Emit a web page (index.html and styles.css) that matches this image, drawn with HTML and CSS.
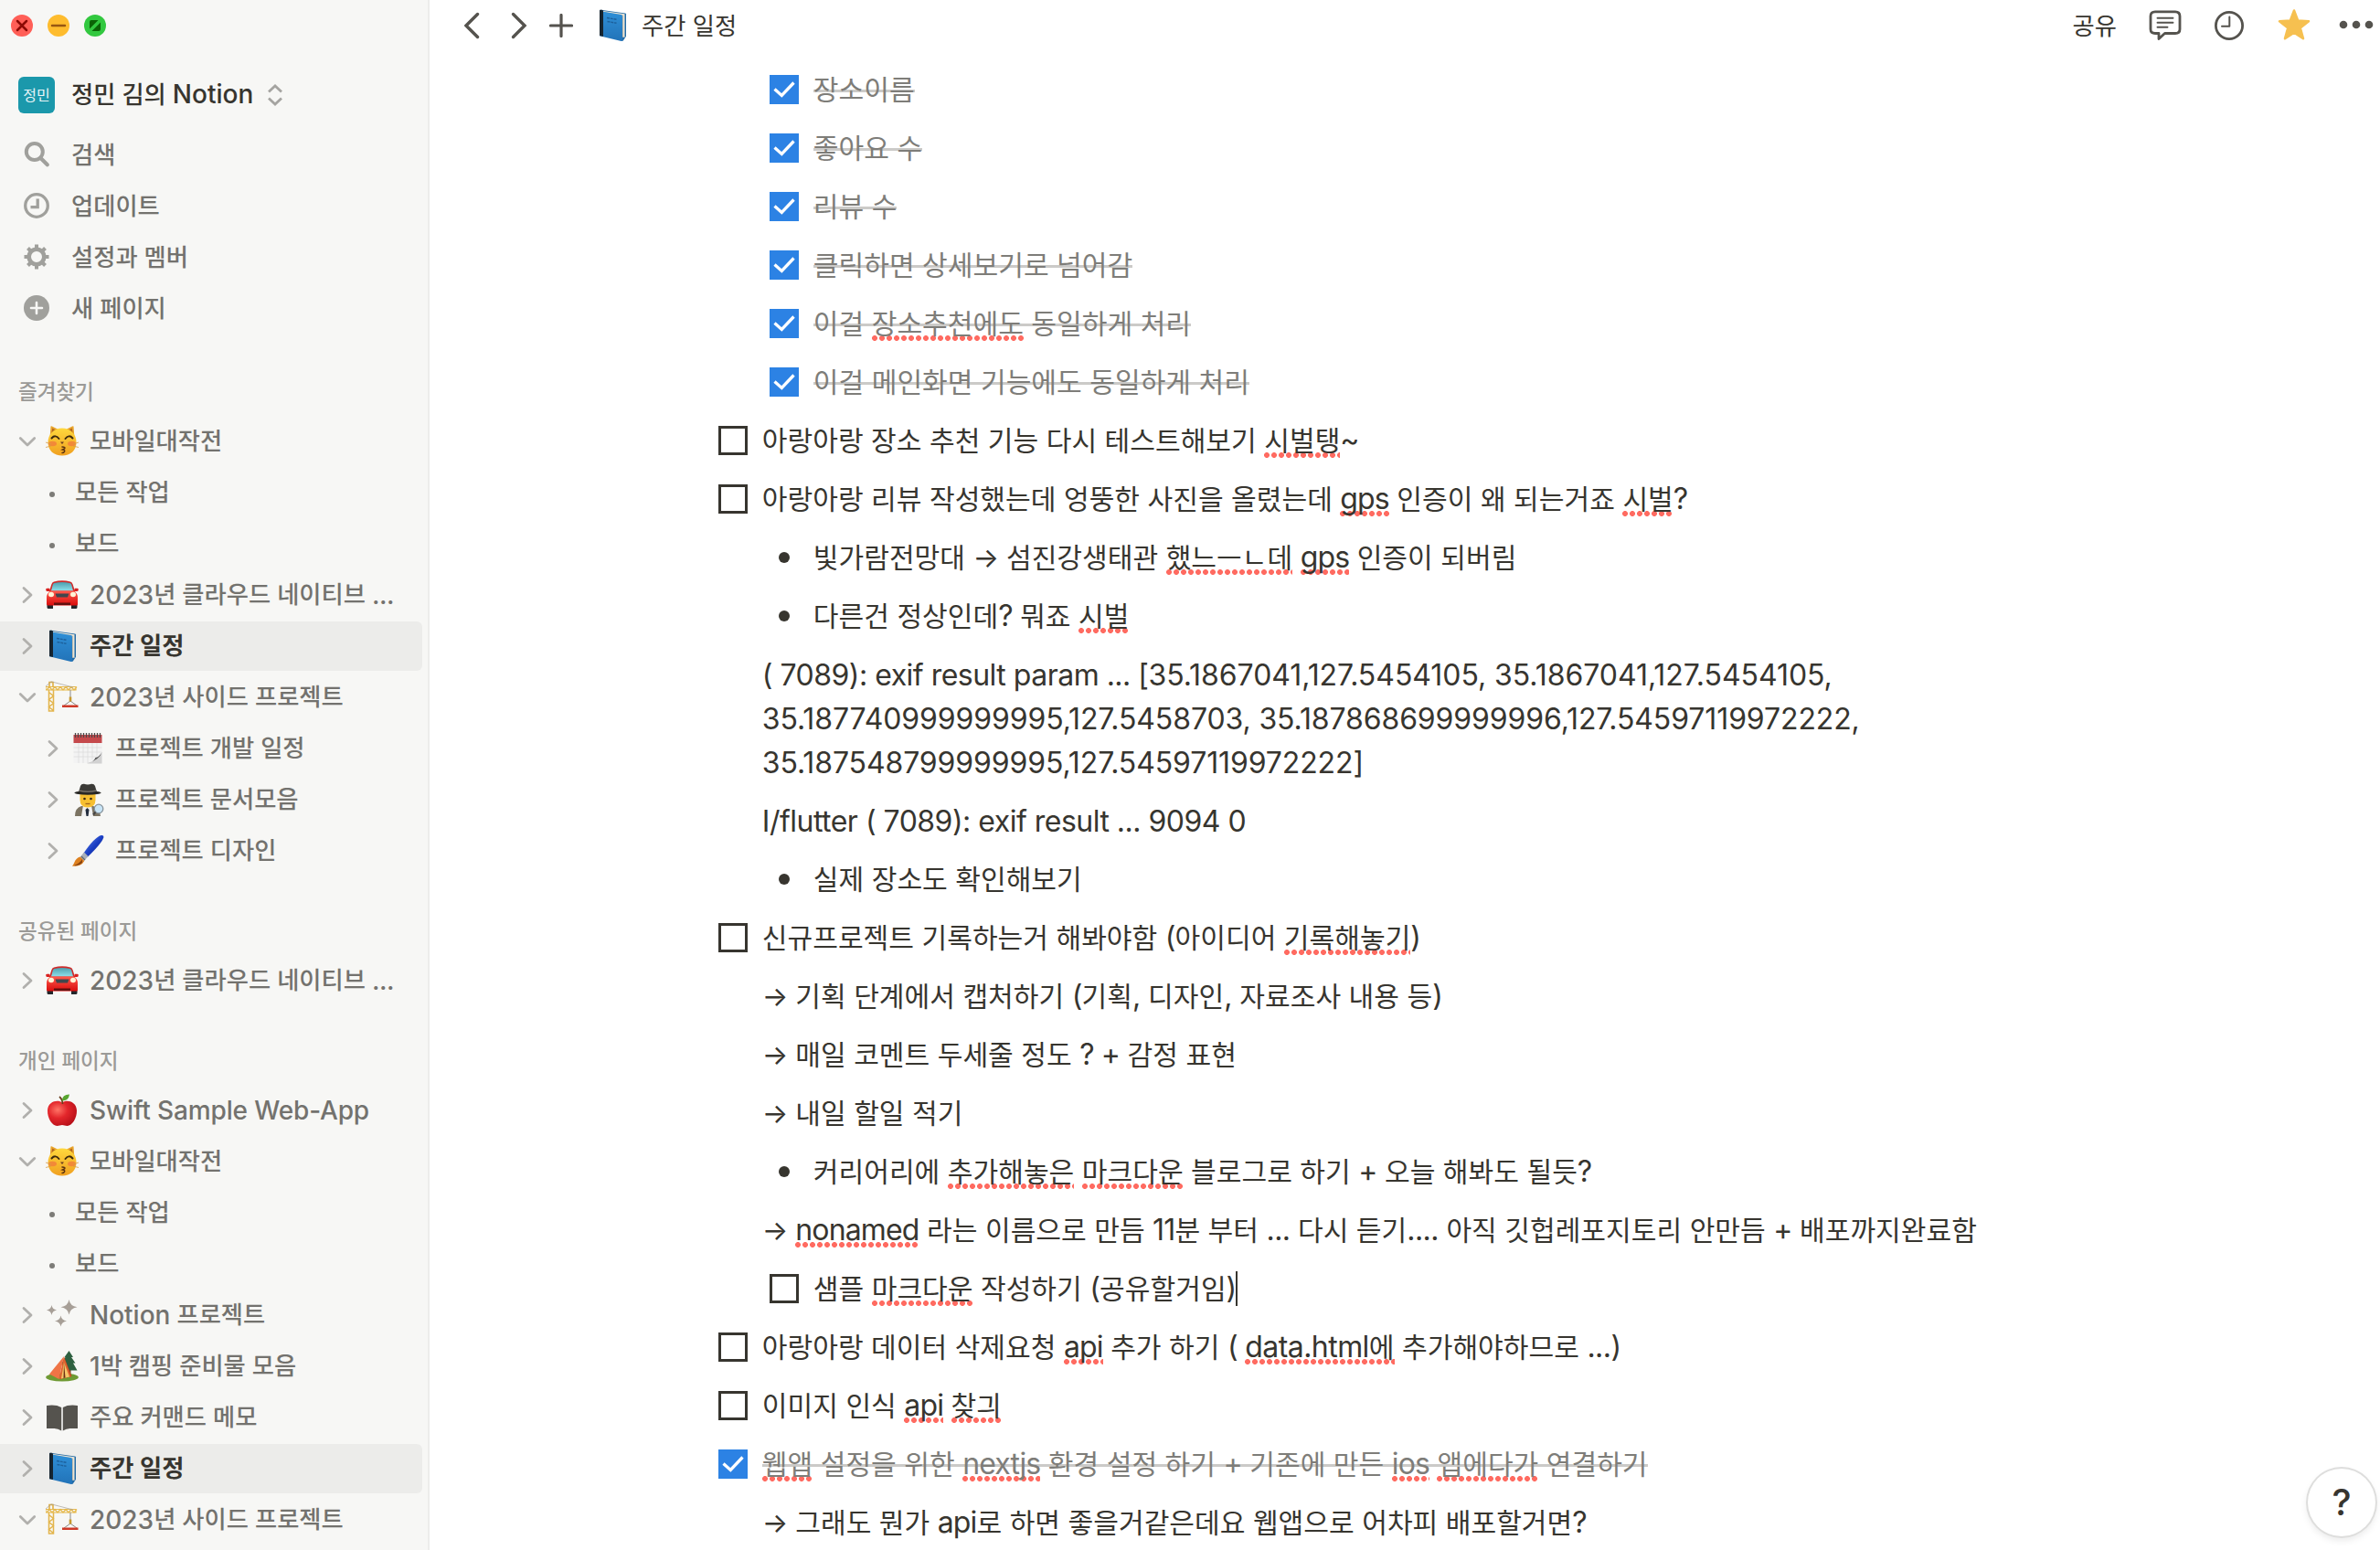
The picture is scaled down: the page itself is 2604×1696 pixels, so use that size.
FILE: index.html
```html
<!DOCTYPE html>
<html lang="ko">
<head>
<meta charset="utf-8">
<title>주간 일정</title>
<link rel="stylesheet" href="styles.css">
</head>
<body>
<svg class="defs" aria-hidden="true">
  <defs>
    <linearGradient id="gCat" x1="0" y1="0" x2="0" y2="1"><stop offset="0" stop-color="#ffd83d"/><stop offset="1" stop-color="#f0a020"/></linearGradient>
    <linearGradient id="gRed" x1="0" y1="0" x2="0" y2="1"><stop offset="0" stop-color="#ff5a4c"/><stop offset="1" stop-color="#d90d0d"/></linearGradient>
    <linearGradient id="gGlass" x1="0" y1="0" x2="0" y2="1"><stop offset="0" stop-color="#4d9fae"/><stop offset="1" stop-color="#8fe0ea"/></linearGradient>
    <linearGradient id="gBook" x1="0" y1="0" x2="0" y2="1"><stop offset="0" stop-color="#2f90d8"/><stop offset="1" stop-color="#2273b8"/></linearGradient>
    <radialGradient id="gApple" cx=".35" cy=".35" r=".75"><stop offset="0" stop-color="#ff7466"/><stop offset=".45" stop-color="#e3262b"/><stop offset="1" stop-color="#b30d17"/></radialGradient>
    <linearGradient id="gPen" x1="0" y1="0" x2="1" y2="1"><stop offset="0" stop-color="#6d90ee"/><stop offset=".5" stop-color="#1b3fc4"/><stop offset="1" stop-color="#0b1d80"/></linearGradient>
  </defs>
  <symbol id="right" viewBox="0 0 20 20"><path d="M6 2.500 14 10 6 17.500" fill="none" stroke="currentColor" stroke-width="2.800" stroke-linecap="round" stroke-linejoin="round"/></symbol>
  <symbol id="down" viewBox="0 0 20 20"><path d="M2.300 6.500 10 14 17.700 6.500" fill="none" stroke="currentColor" stroke-width="2.800" stroke-linecap="round" stroke-linejoin="round"/></symbol>
  <symbol id="cat" viewBox="0 0 36 36">
    <path d="M4.500 15 5.500 1.500Q6 .800 7 1.500L14 5zM31.500 15 30.500 1.500Q30 .800 29 1.500L22 5z" fill="#e9a52c"/>
    <path d="M6.500 9 7.200 3.500 11.500 6zM29.500 9 28.800 3.500 24.500 6z" fill="#b5681f"/>
    <path d="M18 3.500C27 3.500 33.500 10 33.500 19S27 33.500 18 33.500 2.500 28 2.500 19 9 3.500 18 3.500z" fill="url(#gCat)"/>
    <path d="M6.500 14.500q4-4.500 8 .500M21.500 15q4-5 8-.500" fill="none" stroke="#3e2a0c" stroke-width="2" stroke-linecap="round"/>
    <ellipse cx="7.500" cy="20.500" rx="4.500" ry="2.800" fill="#f07a3c" opacity=".75"/><ellipse cx="28.500" cy="20.500" rx="4.500" ry="2.800" fill="#f07a3c" opacity=".75"/>
    <path d="M16 18.500h4l-2 2.500z" fill="#6b3c22"/>
    <path d="M18 24q4 .200 2.500 2l-2 1q3 .500 2 2.200-1 1.300-2.500 1.300" fill="none" stroke="#5d3411" stroke-width="1.500" stroke-linecap="round"/>
    <path d="M0 19l6 2M0 24.500l6-1.500M36 19l-6 2M36 24.500l-6-1.500" stroke="#d79d48" stroke-width=".800"/>
  </symbol>
  <symbol id="car" viewBox="0 0 36 36">
    <path d="M1.500 26h6.500v7H3q-1.500 0-1.500-1.500zM28 26h6.500v5.500q0 1.500-1.500 1.500H28z" fill="#23262b"/>
    <path d="M9 3.500q9-2.500 18 0 2 .600 2.700 3L32 14H4L6.300 6.500q.700-2.400 2.700-3z" fill="#cf2b2a"/>
    <path d="M9.500 5q8.500-2 17 0 1.200.300 1.700 1.800L30 13.500H6L7.800 6.800Q8.300 5.300 9.500 5z" fill="url(#gGlass)"/>
    <path d="M5 13.500h26q4 2.500 4 7.500v7q0 1.500-1.500 1.500h-31Q1 29.500 1 28v-7q0-5 4-7.500z" fill="url(#gRed)"/>
    <path d="M.200 12q0-1.300 1.300-1.300h2.700L5 14H1.500Q.200 14 .200 12zM35.800 12q0-1.300-1.300-1.300h-2.700L31 14h3.500q1.300 0 1.300-2z" fill="#d9201f"/>
    <path d="M10.500 16.500h15L24 20.500H12z" fill="#40474d"/>
    <ellipse cx="6" cy="17.500" rx="3" ry="2.700" fill="#fff3d6"/><ellipse cx="30" cy="17.500" rx="3" ry="2.700" fill="#fff3d6"/>
    <path d="M9 26.500h18v2.500H9z" fill="#62100f"/>
  </symbol>
  <symbol id="book" viewBox="0 0 36 36">
    <path d="M4 1.500Q4 .700 5 .700L32 4.500q1 .200 1 1v24.300L29.500 35z" fill="#226ba7"/>
    <path d="M6.500 1.800 31.500 5.200V31L28 30z" fill="#ece5d6"/>
    <path d="M7 3.500 29.500 7v24" fill="none" stroke="#b5ad9c" stroke-width=".700"/>
    <path d="M4 2 27.500 6q1.500.300 1.500 1.800v26.400q0 1.100-1.300.800L4 29.200z" fill="url(#gBook)"/>
    <path d="M4 1.800q0-1 1-1.100h1.800q1.200 0 1.200 1.500V30l-4-1z" fill="#16242f"/>
    <path d="M12 9.500l11 1.800M12.500 13.500l10 1.800" stroke="#1d609b" stroke-width="1.400" stroke-dasharray="3 .800"/>
  </symbol>
  <symbol id="crane" viewBox="0 0 36 36">
    <path d="M3.500 9.500V33h5V9.500M3.500 12.500l5 4-5 4 5 4-5 4 5 4" fill="none" stroke="#e3b54c" stroke-width="1.500"/>
    <path d="M0 6.500h33v3.500H0zM1 10l3-3.500 3 3.500 3-3.500 3 3.500 3-3.500 3 3.500 3-3.500 3 3.500 3-3.500 3 3.500 3-3.500" fill="none" stroke="#e6b94d" stroke-width="1.200"/>
    <path d="M4 6.500V1.500h4v5" fill="none" stroke="#dfac38" stroke-width="1.500"/><path d="M0 6 6 .800 30 7" fill="none" stroke="#a5a19a" stroke-width=".700"/>
    <path d="M27 10v12M27 22l-7 5M27 22l7 5" fill="none" stroke="#8c8a86" stroke-width="1"/><path d="M25.700 17.500h2.600v5h-2.600z" fill="#c79a2e"/>
    <path d="M18 26.500h17.500V29H18z" fill="#cf3a28"/>
  </symbol>
  <symbol id="cal" viewBox="0 0 36 36">
    <path d="M2.500 3h31v31h-31z" fill="#f3f3f3"/><path d="M2.500 3h31v9h-31z" fill="#c5494c"/>
    <path d="M2.500 17h31M2.500 22h31M2.500 27h25M8 12v22M13 12v22M18 12v22M23 12v18M28 12v14" stroke="#dcdcdc" stroke-width=".800"/>
    <path d="M17 34.500q8-2 9.500-6.500 4 0 7-6v12.500z" fill="#d2d2d2"/><path d="M17 34.500q8-2 9.500-6.500 4-.500 7-6-2.500 8.500-16.500 12.500z" fill="#565656"/>
    <path d="M4.500 1v5M7.500 1v5M10.500 1v5M13.500 1v5M16.500 1v5M19.500 1v5M22.500 1v5M25.500 1v5M28.500 1v5M31.500 1v5" stroke="#4d4547" stroke-width="1.300"/>
  </symbol>
  <symbol id="spy" viewBox="0 0 36 36">
    <path d="M4 36q0-9 7-11h13q7 2 8 11z" fill="#7b7362"/><path d="M13 24h9l2 12H11z" fill="#f1f1f1"/><path d="M17.500 27l2 2-1 7h-2l-1-7z" fill="#222c3d"/>
    <path d="M9.500 11h17v7q0 8.500-8.500 8.500T9.500 18z" fill="#f6bf31"/>
    <circle cx="14.500" cy="17" r="1.300" fill="#3a2a14"/><circle cx="21.500" cy="17" r="1.300" fill="#3a2a14"/><path d="M15.500 22.500h5" stroke="#a3641c" stroke-width="1.300"/>
    <path d="M8 10 10 3Q11 .500 14 .800q4 1.200 8 0 3-.300 4 2.200l2 7z" fill="#3b3a36"/><ellipse cx="18" cy="10.500" rx="14.500" ry="2.200" fill="#292825"/>
    <path d="M8.500 8q9.500 2.500 19 0" stroke="#77726a" stroke-width="1.500" fill="none"/>
    <circle cx="30" cy="28" r="4.800" fill="#c8e4f6" stroke="#88949c" stroke-width="1.300"/><path d="M26.500 31.500 24 34.500" stroke="#454545" stroke-width="2"/>
  </symbol>
  <symbol id="brush" viewBox="0 0 36 36">
    <path d="M13.500 20.500Q25 3.500 32.500 1q3.500-.700 2.700 2.700Q33 10 17.500 25z" fill="url(#gPen)"/>
    <path d="M9.500 25 14 19.500 18.500 24 14 29z" fill="#a9b0ba"/><path d="M11 24 15 28" stroke="#5f6670" stroke-width="1.200"/>
    <path d="M9.800 24.500 14.300 29Q11 35.300 1 34.800q1-1 2.200-3.800 2-5.500 6.600-6.500z" fill="#dd8120"/><path d="M12 27q-3 5-9 7 5 1 9-3z" fill="#894411"/>
  </symbol>
  <symbol id="apple" viewBox="0 0 36 36">
    <path d="M18 9.500C22 6 33.500 7.500 34 18c.200 8.500-5 17-10.500 17-2 0-3.500-1-5.500-1s-3.500 1-5.500 1C7 35 1.800 26.500 2 18 2.500 7.500 14 6 18 9.500z" fill="url(#gApple)"/>
    <path d="M18.500 11Q18.500 6 15 3" fill="none" stroke="#6a3e1d" stroke-width="1.700"/><path d="M17.500 7.500Q18.500.300 26 .500 25 7.800 17.500 7.500z" fill="#57a52f"/>
  </symbol>
  <symbol id="sparkle" viewBox="0 0 36 36"><path d="M25.500 1q1 7 9 8.200-8 1.300-9 8.300-1-7-9-8.300 8-1.200 9-8.200zM6.500 7q.700 4.500 5.500 5.500-4.800.900-5.500 5.500-.700-4.600-5.500-5.500 4.800-1 5.500-5.500zM16.500 18.500q.800 5 6.500 6-5.700 1-6.500 6-.800-5-6.500-6 5.700-1 6.500-6z" fill="#a79f97"/></symbol>
  <symbol id="camp" viewBox="0 0 36 36">
    <ellipse cx="18" cy="30" rx="17.800" ry="4.500" fill="#6f9a34"/>
    <path d="M25.500 1 30 8h-2l4.500 6.500H30l4.500 8H20L17 15l4.500-7h-1z" fill="#2e6040"/><path d="M25 22h2.500v6H25z" fill="#6b4524"/>
    <path d="M20 7.500 28.500 29 16 32z" fill="#c6461c"/><path d="M20 7 4 26.500 14.500 32z" fill="#ef7446"/><path d="M20 8 14.500 32l13-2.800z" fill="#de6431"/><path d="M20 14 17 31.500l9-2z" fill="#f6c66a"/><path d="M20 14 19.500 31l2-.500z" fill="#6b2f14"/>
  </symbol>
  <symbol id="openbook" viewBox="0 0 36 36"><path d="M1 5q10-1.500 16.200 2v25.500Q13 29.500 8 30H1zM35 5q-10-1.500-16.200 2v25.500Q23 29.500 28 30h7z" fill="#55534e"/></symbol>
</svg>

<div class="app">
  <aside class="sidebar">
    <div class="lights">
      <svg class="light" viewBox="0 0 24 24"><circle cx="12" cy="12" r="12" fill="#ff5f57"/><path d="M7 7l10 10M17 7 7 17" stroke="#8c0a05" stroke-width="2.500" stroke-linecap="round"/></svg>
      <svg class="light" viewBox="0 0 24 24"><circle cx="12" cy="12" r="12" fill="#febc2e"/><path d="M5 12h14" stroke="#985712" stroke-width="2.500" stroke-linecap="round"/></svg>
      <svg class="light" viewBox="0 0 24 24"><circle cx="12" cy="12" r="12" fill="#32c83f"/><path d="M6 15.500V8q0-2 2-2h7.500zM18 8.500V16q0 2-2 2H8.500z" fill="#0b6306"/></svg>
    </div>
    <div class="workspace">
      <span class="avatar">정민</span>
      <span class="workspace-name">정민 김의 <span class="en">Notion</span></span>
      <svg class="updown" viewBox="0 0 18 24"><path d="M2 8.500 9 2l7 6.500M2 15.500 9 22l7-6.500" fill="none" stroke="currentColor" stroke-width="2.800"/></svg>
    </div>
    <nav class="menu">
      <div class="menu-item"><svg class="menu-icon" viewBox="0 0 28 28"><circle cx="11.800" cy="11" r="9" fill="none" stroke="currentColor" stroke-width="4"/><path d="M18.500 18 25.800 25.300" stroke="currentColor" stroke-width="4.200" stroke-linecap="round"/></svg>검색</div>
      <div class="menu-item"><svg class="menu-icon" viewBox="0 0 28 28"><circle cx="14" cy="14" r="12.300" fill="none" stroke="currentColor" stroke-width="3.300"/><path d="M15.200 6.500v9.200H7.500" fill="none" stroke="currentColor" stroke-width="3.300"/></svg>업데이트</div>
      <div class="menu-item"><svg class="menu-icon" viewBox="0 0 28 28"><circle cx="14" cy="14" r="8.300" fill="none" stroke="currentColor" stroke-width="4.600"/><path d="M14 .500v5M14 22.500v5M.500 14h5M22.500 14h5M4.500 4.500 8 8M20 20l3.500 3.500M23.500 4.500 20 8M8 20l-3.500 3.500" stroke="currentColor" stroke-width="4"/></svg>설정과 멤버</div>
      <div class="menu-item"><svg class="menu-icon" viewBox="0 0 28 28"><circle cx="14" cy="14" r="14" fill="currentColor"/><path d="M14 8v12M8 14h12" stroke="#f7f7f5" stroke-width="2.600" stroke-linecap="round"/></svg>새 페이지</div>
    </nav>

    <section class="group">
      <h2 class="group-title">즐겨찾기</h2>
      <div class="page"><svg class="chev"><use href="#down"/></svg><svg class="emoji"><use href="#cat"/></svg>모바일대작전</div>
      <div class="page view"><i class="dot"></i>모든 작업</div>
      <div class="page view"><i class="dot"></i>보드</div>
      <div class="page"><svg class="chev"><use href="#right"/></svg><svg class="emoji"><use href="#car"/></svg><span class="en">2023</span>년 클라우드 네이티브 <span class="en more-dots">...</span></div>
      <div class="page active"><svg class="chev"><use href="#right"/></svg><svg class="emoji"><use href="#book"/></svg>주간 일정</div>
      <div class="page"><svg class="chev"><use href="#down"/></svg><svg class="emoji"><use href="#crane"/></svg><span class="en">2023</span>년 사이드 프로젝트</div>
      <div class="page nested"><svg class="chev"><use href="#right"/></svg><svg class="emoji"><use href="#cal"/></svg>프로젝트 개발 일정</div>
      <div class="page nested"><svg class="chev"><use href="#right"/></svg><svg class="emoji"><use href="#spy"/></svg>프로젝트 문서모음</div>
      <div class="page nested"><svg class="chev"><use href="#right"/></svg><svg class="emoji"><use href="#brush"/></svg>프로젝트 디자인</div>
    </section>
    <section class="group">
      <h2 class="group-title">공유된 페이지</h2>
      <div class="page"><svg class="chev"><use href="#right"/></svg><svg class="emoji"><use href="#car"/></svg><span class="en">2023</span>년 클라우드 네이티브 <span class="en more-dots">...</span></div>
    </section>
    <section class="group">
      <h2 class="group-title">개인 페이지</h2>
      <div class="page"><svg class="chev"><use href="#right"/></svg><svg class="emoji"><use href="#apple"/></svg><span class="en latin">Swift Sample Web-App</span></div>
      <div class="page"><svg class="chev"><use href="#down"/></svg><svg class="emoji"><use href="#cat"/></svg>모바일대작전</div>
      <div class="page view"><i class="dot"></i>모든 작업</div>
      <div class="page view"><i class="dot"></i>보드</div>
      <div class="page"><svg class="chev"><use href="#right"/></svg><svg class="emoji"><use href="#sparkle"/></svg><span class="en">Notion</span>&nbsp;프로젝트</div>
      <div class="page"><svg class="chev"><use href="#right"/></svg><svg class="emoji"><use href="#camp"/></svg><span class="en">1</span>박 캠핑 준비물 모음</div>
      <div class="page"><svg class="chev"><use href="#right"/></svg><svg class="emoji"><use href="#openbook"/></svg>주요 커맨드 메모</div>
      <div class="page active"><svg class="chev"><use href="#right"/></svg><svg class="emoji"><use href="#book"/></svg>주간 일정</div>
      <div class="page"><svg class="chev"><use href="#down"/></svg><svg class="emoji"><use href="#crane"/></svg><span class="en">2023</span>년 사이드 프로젝트</div>
    </section>
  </aside>

  <main class="main">
    <header class="topbar">
      <svg class="nav-back" viewBox="0 0 18 30"><path d="M15.500 2.500 3 15l12.500 12.500" fill="none" stroke="currentColor" stroke-width="3.400" stroke-linecap="round"/></svg>
      <svg class="nav-next" viewBox="0 0 18 30"><path d="M2.500 2.500 15 15 2.500 27.500" fill="none" stroke="currentColor" stroke-width="3.400" stroke-linecap="round"/></svg>
      <svg class="nav-add" viewBox="0 0 26 26"><path d="M13 1.500v23M1.500 13h23" stroke="currentColor" stroke-width="3.200" stroke-linecap="round"/></svg>
      <svg class="crumb-icon"><use href="#book"/></svg>
      <span class="crumb">주간 일정</span>
      <span class="share">공유</span>
      <svg class="comment" viewBox="0 0 36 34"><path d="M7 1.800h22q5 0 5 5V21q0 4.500-5 4.500H17.500L11 31.500v-6H7q-5 0-5-4.500V6.800q0-5 5-5z" fill="none" stroke="currentColor" stroke-width="2.800" stroke-linejoin="round"/><path d="M9.500 8.800h17M9.500 13.800h17M9.500 18.800h11" stroke="currentColor" stroke-width="1.900" stroke-linecap="round"/></svg>
      <svg class="clock" viewBox="0 0 32 32"><circle cx="16" cy="16" r="14.600" fill="none" stroke="currentColor" stroke-width="2.800"/><path d="M16.300 6.500v10.300H8" fill="none" stroke="currentColor" stroke-width="2" stroke-linecap="round" stroke-linejoin="round"/></svg>
      <svg class="star" viewBox="0 0 36 34"><path d="M18 1.500 22.200 12.500 34 13.200 24.800 20.600 28 32.200 18 25.600 8 32.200 11.200 20.600 2 13.200 13.800 12.500z" fill="#f6c050" stroke="#f6c050" stroke-width="2.500" stroke-linejoin="round"/></svg>
      <svg class="more" viewBox="0 0 38 10"><circle cx="5" cy="5" r="4.300"/><circle cx="19" cy="5" r="4.300"/><circle cx="33" cy="5" r="4.300"/></svg>
    </header>

    <article class="doc">
      <div class="block in"><svg class="box on" viewBox="0 0 32 32"><path d="M5.500 15.500 13.300 22.500 26.500 8.500" fill="none" stroke="#fff" stroke-width="3.300"/></svg><p class="text"><span class="done">장소이름</span></p></div>
      <div class="block in"><svg class="box on" viewBox="0 0 32 32"><path d="M5.500 15.500 13.300 22.500 26.500 8.500" fill="none" stroke="#fff" stroke-width="3.300"/></svg><p class="text"><span class="done">좋아요 수</span></p></div>
      <div class="block in"><svg class="box on" viewBox="0 0 32 32"><path d="M5.500 15.500 13.300 22.500 26.500 8.500" fill="none" stroke="#fff" stroke-width="3.300"/></svg><p class="text"><span class="done">리뷰 수</span></p></div>
      <div class="block in"><svg class="box on" viewBox="0 0 32 32"><path d="M5.500 15.500 13.300 22.500 26.500 8.500" fill="none" stroke="#fff" stroke-width="3.300"/></svg><p class="text"><span class="done">클릭하면 상세보기로 넘어감</span></p></div>
      <div class="block in"><svg class="box on" viewBox="0 0 32 32"><path d="M5.500 15.500 13.300 22.500 26.500 8.500" fill="none" stroke="#fff" stroke-width="3.300"/></svg><p class="text"><span class="done">이걸 <span class="sp">장소추천에도</span> 동일하게 처리</span></p></div>
      <div class="block in"><svg class="box on" viewBox="0 0 32 32"><path d="M5.500 15.500 13.300 22.500 26.500 8.500" fill="none" stroke="#fff" stroke-width="3.300"/></svg><p class="text"><span class="done">이걸 메인화면 기능에도 동일하게 처리</span></p></div>
      <div class="block"><span class="box"></span><p class="text">아랑아랑 장소 추천 기능 다시 테스트해보기 <span class="sp">시벌탱</span><span class="en">~</span></p></div>
      <div class="block"><span class="box"></span><p class="text">아랑아랑 리뷰 작성했는데 엉뚱한 사진을 올렸는데 <span class="sp en">gps</span> 인증이 왜 되는거죠 <span class="sp">시벌</span><span class="en">?</span></p></div>
      <div class="block in"><i class="bullet"></i><p class="text">빛가람전망대 <span class="arrow">→</span> 섬진강생태관 <span class="sp">했느ㅡㄴ데</span> <span class="sp en">gps</span> 인증이 되버림</p></div>
      <div class="block in"><i class="bullet"></i><p class="text">다른건 정상인데<span class="en">?</span> 뭐죠 <span class="sp">시벌</span></p></div>
      <div class="block plain tall"><p class="text latin-only"><span class="en">( 7089): exif result param ... [</span><span class="num first">35.1867041,127.5454105, 35.1867041,127.5454105,</span><br><span class="num">35.187740999999995,127.5458703, 35.187868699999996,127.54597119972222,</span><br><span class="num">35.187548799999995,127.54597119972222]</span></p></div>
      <div class="block plain"><p class="text latin-only"><span class="en">I/flutter ( 7089): exif result ... 9094 0</span></p></div>
      <div class="block in"><i class="bullet"></i><p class="text">실제 장소도 확인해보기</p></div>
      <div class="block"><span class="box"></span><p class="text">신규프로젝트 기록하는거 해봐야함 <span class="en">(</span>아이디어 <span class="sp">기록해놓기</span><span class="en">)</span></p></div>
      <div class="block plain"><p class="text"><span class="arrow">→</span> 기획 단계에서 캡처하기 <span class="en">(</span>기획<span class="en mark">,</span> 디자인<span class="en mark">,</span> 자료조사 내용 등<span class="en">)</span></p></div>
      <div class="block plain"><p class="text"><span class="arrow">→</span> 매일 코멘트 두세줄 정도 <span class="en">? +</span> 감정 표현</p></div>
      <div class="block plain"><p class="text"><span class="arrow">→</span> 내일 할일 적기</p></div>
      <div class="block in"><i class="bullet"></i><p class="text">커리어리에 <span class="sp">추가해놓은</span> <span class="sp">마크다운</span> 블로그로 하기 <span class="en">+</span> 오늘 해봐도 될듯<span class="en">?</span></p></div>
      <div class="block plain"><p class="text"><span class="arrow">→</span> <span class="sp en">nonamed</span> 라는 이름으로 만듬 <span class="en">11</span>분 부터 <span class="en mark">...</span> 다시 듣기<span class="en mark">....</span> 아직 깃헙레포지토리 안만듬 <span class="en">+</span> 배포까지완료함</p></div>
      <div class="block in"><span class="box"></span><p class="text">샘플 <span class="sp">마크다운</span> 작성하기 <span class="en">(</span>공유할거임<span class="en">)</span></p><i class="caret"></i></div>
      <div class="block"><span class="box"></span><p class="text">아랑아랑 데이터 삭제요청 <span class="sp en">api</span> 추가 하기 <span class="en">(</span> <span class="sp"><span class="en mark">data.html</span>에</span> 추가해야하므로 <span class="en mark">...)</span></p></div>
      <div class="block"><span class="box"></span><p class="text">이미지 인식 <span class="sp en">api</span> <span class="sp">찾긔</span></p></div>
      <div class="block"><svg class="box on" viewBox="0 0 32 32"><path d="M5.500 15.500 13.300 22.500 26.500 8.500" fill="none" stroke="#fff" stroke-width="3.300"/></svg><p class="text"><span class="done"><span class="sp">웹앱</span> 설정을 위한 <span class="sp en">nextjs</span> 환경 설정 하기 <span class="en">+</span> 기존에 만든 <span class="sp en">ios</span> <span class="sp">앱에다가</span> 연결하기</span></p></div>
      <div class="block plain"><p class="text"><span class="arrow">→</span> 그래도 뭔가 <span class="en">api</span>로 하면 좋을거같은데요 웹앱으로 어차피 배포할거면<span class="en">?</span></p></div>
    </article>
    <button class="help">?</button>
  </main>
</div>
</body>
</html>
```
FILE: styles.css
```css
* { box-sizing: border-box; }

body {
  margin: 0;
  font-family: "Inter", "Noto Sans CJK KR", sans-serif;
  color: #37352f;
  background: #fff;
  overflow: hidden;
}

.defs { display: block; width: 0; height: 0; }

.app { display: flex; height: 1696px; overflow: hidden; }

/* Sidebar */
.sidebar {
  flex: none;
  width: 470px;
  background: #f7f7f5;
  border-right: 2px solid #ededeb;
  font-size: 26.3px;
  font-weight: 500;
  color: #73726e;
  white-space: nowrap;
  overflow: hidden;
}

.sidebar .en { font-size: 28px; }
.sidebar .latin { letter-spacing: -.15px; }
.sidebar .more-dots { letter-spacing: -.5px; }

.lights { display: flex; gap: 16px; padding: 16px 0 0 12px; height: 78px; }
.light { width: 24px; height: 24px; }

.workspace { display: flex; align-items: center; height: 52px; padding-left: 20px; color: #37352f; }
.avatar {
  width: 40px;
  height: 40px;
  border-radius: 6px;
  background: #1b98ab;
  color: #e8f5f7;
  font-size: 16px;
  font-weight: 400;
  line-height: 40px;
  text-align: center;
}
.workspace-name { margin-left: 18px; line-height: 52px; }
.workspace-name .en { line-height: 1; }
.updown { width: 18px; height: 24px; margin-left: 15px; color: #a5a4a1; }

.menu { padding-top: 11px; }
.menu-item { display: flex; align-items: center; height: 56px; padding-left: 26px; line-height: 57px; }
.menu-icon { width: 28px; height: 28px; margin-right: 24px; color: #a0a09c; overflow: visible; }

.menu + .group { padding-top: 37px; }
.group + .group { padding-top: 34px; }
.group-title {
  margin: 0 0 1px;
  padding-left: 20px;
  height: 53px;
  line-height: 53px;
  font-size: 22.5px;
  font-weight: 500;
  color: #9b9a97;
}

.page { display: flex; align-items: center; width: 462px; height: 54px; margin-bottom: 2px; padding-left: 20px; line-height: 54px; white-space: pre; border-radius: 0 6px 6px 0; }
.page:last-child { margin-bottom: 0; }
.chev { width: 20px; height: 20px; margin-right: 10px; color: #b1b0ad; }
.emoji { width: 36px; height: 36px; margin-right: 12px; }
.nested { padding-left: 48px; }
.view { padding-left: 54px; }
.dot { width: 6px; height: 6px; margin: 4px 22px 0 0; border-radius: 50%; background: #7d7c78; }
.active { background: #ececea; color: #37352f; font-weight: 600; }

/* Main column */
.main { flex: 1; position: relative; min-width: 0; }

.topbar { display: flex; align-items: center; height: 56px; padding-left: 37px; font-size: 26.3px; line-height: 57px; color: #37352f; }
.topbar svg { flex: none; color: #55534e; }
.nav-back { width: 18px; height: 30px; }
.nav-next { width: 18px; height: 30px; margin-left: 34px; }
.nav-add { width: 26px; height: 26px; margin-left: 24px; }
.crumb-icon { width: 36px; height: 36px; margin-left: 25px; }
.crumb { margin-left: 14px; }
.share { margin-left: auto; line-height: 55px; }
.comment { width: 36px; height: 34px; margin-left: 35px; margin-bottom: 1px; }
.clock { width: 32px; height: 32px; margin-left: 36px; margin-bottom: 1px; }
.star { width: 36px; height: 34px; margin-left: 37px; margin-bottom: 2px; }
.more { width: 38px; height: 10px; margin: 0 7px 2px 31px; fill: #55534e; }

.doc { display: flex; flex-direction: column; gap: 16px; padding: 18px 0 0 316px; }

.block { display: flex; align-items: center; height: 48px; font-size: 30.12px; line-height: 48px; white-space: nowrap; }
.block.in { padding-left: 56px; }
.block.plain { padding-left: 48px; }
.block.tall { height: 144px; }
.text { margin: 0 0 0 -.2px; height: 48px; }
.tall .text { height: 144px; }
.text .en { font-size: 32px; letter-spacing: -.85px; }
.text .mark { letter-spacing: -.55px; }
.text.latin-only { font-size: 32px; padding-top: 1px; }
.latin-only .en { letter-spacing: -.51px; }
.num { letter-spacing: -.11px; }
.num.first { letter-spacing: -.05px; }

.box { flex: none; width: 32px; height: 32px; margin-right: 16px; border: 3px solid #37352f; }
.box.on { border: 0; background: #2c82e4; }
.bullet { flex: none; width: 12px; height: 12px; margin: 0 26px 0 10px; border-radius: 50%; background: #37352f; }

.done { display: inline-block; height: 48px; color: #7e7d79; background: linear-gradient(#cbcac8, #cbcac8) 0 24px / 100% 3px no-repeat; }
.sp { display: inline-block; height: 48px; background: radial-gradient(circle at 3px 3px, #ff6b61 2.6px, transparent 3.3px) 0 37px / 8px 6px repeat-x; }
.arrow { display: inline-block; width: 28px; height: 48px; font-size: 30px; letter-spacing: -2px; }
.caret { width: 2px; height: 38px; background: #37352f; }

.help {
  position: absolute;
  right: 5px;
  bottom: 15px;
  width: 74px;
  height: 74px;
  padding: 0;
  border: 0;
  border-radius: 50%;
  background: #fff;
  box-shadow: 0 0 0 2px #dededd, 0 4px 8px rgba(15, 15, 15, .1);
  font: 500 40px/74px "Inter", sans-serif;
  color: #37352f;
}
```
